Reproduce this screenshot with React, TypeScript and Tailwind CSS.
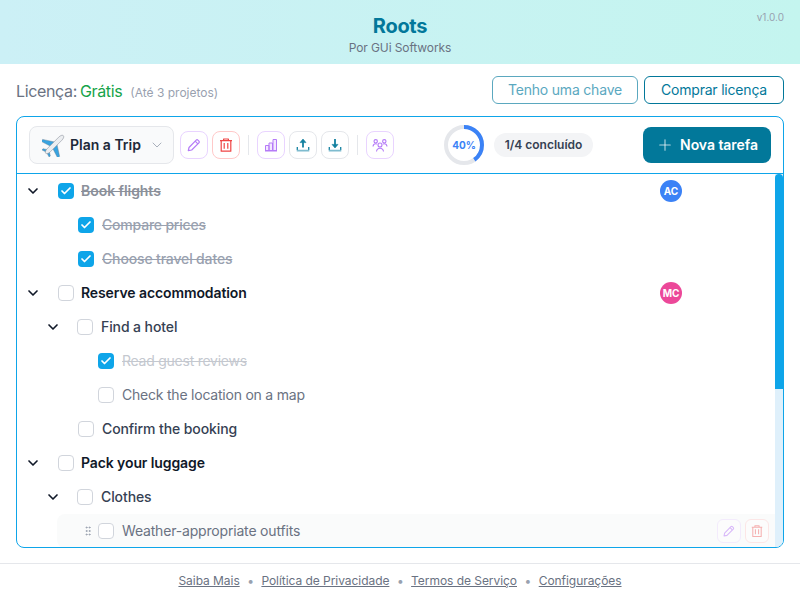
import { Check, ChevronDown, GripVertical, Plus } from "lucide-react";

type Row = {
  label: string;
  pad: string;
  parent?: boolean;
  arrowGap?: string;
  done?: boolean;
  gap: string;
  text: string;
  avatar?: { name: string; color: string };
};

const rows: Row[] = [
  { label: "Book flights", pad: "pl-[8px]", parent: true, arrowGap: "mr-[17px]", gap: "ml-[7px]", done: true, text: "font-semibold tracking-[-0.05px] text-[#8b909a] line-through", avatar: { name: "AC", color: "bg-[#3b82f6]" } },
  { label: "Compare prices", pad: "pl-[61px]", gap: "ml-[8px]", done: true, text: "font-medium tracking-[-0.2px] text-gray-400 line-through" },
  { label: "Choose travel dates", pad: "pl-[61px]", gap: "ml-[8px]", done: true, text: "font-medium tracking-[-0.15px] text-gray-400 line-through" },
  { label: "Reserve accommodation", pad: "pl-[8px]", parent: true, arrowGap: "mr-[17px]", gap: "ml-[7px]", text: "font-semibold tracking-[-0.1px] text-gray-900", avatar: { name: "MC", color: "bg-[#ec4899]" } },
  { label: "Find a hotel", pad: "pl-[28px]", parent: true, arrowGap: "mr-[16px]", gap: "ml-[8px]", text: "font-medium tracking-[-0.1px] text-gray-700" },
  { label: "Read guest reviews", pad: "pl-[81px]", gap: "ml-[8px]", done: true, text: "tracking-[-0.25px] text-[#c4c8cf] line-through" },
  { label: "Check the location on a map", pad: "pl-[81px]", gap: "ml-[8px]", text: "tracking-[-0.22px] text-gray-500" },
  { label: "Confirm the booking", pad: "pl-[61px]", gap: "ml-[8px]", text: "font-medium tracking-[-0.1px] text-gray-700" },
  { label: "Pack your luggage", pad: "pl-[8px]", parent: true, arrowGap: "mr-[17px]", gap: "ml-[7px]", text: "font-semibold tracking-[-0.1px] text-gray-900" },
  { label: "Clothes", pad: "pl-[28px]", parent: true, arrowGap: "mr-[16px]", gap: "ml-[8px]", text: "font-medium tracking-[-0.1px] text-gray-700" },
];

const PencilIcon = ({ size = 16 }: { size?: number }) => (
  <svg width={size} height={size} viewBox="0 0 16 16" fill="none" stroke="currentColor" strokeWidth="1.2" strokeLinejoin="round">
    <path d="M2.300 13.700l.7-3.200 7.200-7.400c.5-.5 1.200-.5 1.700 0l1 1c.5.5.5 1.200 0 1.700l-7.200 7.200-3.400.7z" />
    <path d="M9.200 4.200l2.600 2.600" />
  </svg>
);

const TrashIcon = ({ size = 16 }: { size?: number }) => (
  <svg width={size} height={size} viewBox="0 0 16 16" fill="none" stroke="currentColor" strokeWidth="1.2" strokeLinejoin="round">
    <path d="M2 3.600h12M5.600 3.400V2h4.800v1.400M3.200 3.600v10.600h9.600V3.600M6.200 6v5.800M9.800 6v5.800" />
  </svg>
);

const ChartIcon = () => (
  <svg width="16" height="16" viewBox="0 0 16 16" fill="none" stroke="#b57bf7" strokeWidth="1">
    <path d="M2.500 8.500h3.500v5H2.500zM6 6h3.500v7.500H6zM10 2.500h3.500v11H10z" fill="#f3e8ff" />
    <path d="M2 13.800h12" stroke="#b57bf7" strokeWidth="1.600" />
  </svg>
);

const UploadIcon = () => (
  <svg width="16" height="16" viewBox="0 0 16 16" fill="none" stroke="#1481a0" strokeWidth="1.300">
    <path d="M8 10.500V3.500" strokeWidth="1.800" />
    <path d="M5 5.600L8 2l3 3.600z" fill="#1481a0" strokeWidth=".6" strokeLinejoin="round" />
    <path d="M2.300 10v3" />
    <path d="M13.700 10v3" />
    <path d="M1.700 13.700h12.600" stroke="#7fbccf" strokeWidth="1.800" />
  </svg>
);

const DownloadIcon = () => (
  <svg width="16" height="16" viewBox="0 0 16 16" fill="none" stroke="#1481a0" strokeWidth="1.300">
    <path d="M8 2v7" strokeWidth="1.800" />
    <path d="M5 7.400L8 11l3-3.600z" fill="#1481a0" strokeWidth=".6" strokeLinejoin="round" />
    <path d="M2.300 10v3" />
    <path d="M13.700 10v3" />
    <path d="M1.700 13.700h12.600" stroke="#7fbccf" strokeWidth="1.800" />
  </svg>
);

const GroupIcon = () => (
  <svg width="16" height="16" viewBox="0 0 16 16" fill="none" stroke="#b57bf7" strokeWidth="1.100">
    <circle cx="8" cy="8" r="2" />
    <circle cx="3.700" cy="4.300" r="1.700" />
    <circle cx="12.300" cy="4.300" r="1.700" />
    <path d="M4.500 14.500c.3-2 1.600-3.200 3.500-3.200s3.200 1.200 3.500 3.200M1 9.500c.2-1.700 1-2.800 2.700-2.800.6 0 1 .1 1.400.4M15 9.500c-.2-1.700-1-2.800-2.700-2.800-.6 0-1 .1-1.400.4" />
  </svg>
);

const PlaneIcon = () => (
  <svg width="23" height="23" viewBox="0 0 24 24">
    <g transform="rotate(45 12 12)">
      <path d="M10.400 8.500L-.5 15.500v2.700l10.900-3.500z" fill="#38a3e0" stroke="#6b7a87" strokeWidth=".4" />
      <path d="M13.600 8.500l10.900 7v2.700l-10.900-3.500z" fill="#38a3e0" stroke="#6b7a87" strokeWidth=".4" />
      <path d="M10.600 19.500l-4 2.600v1.700l4.200-1.300zM13.400 19.500l4 2.600v1.700l-4.200-1.300z" fill="#38a3e0" stroke="#6b7a87" strokeWidth=".4" />
      <path d="M12 -2.500c1.500 0 2.300 2.300 2.300 4.500v17.500c0 1.800-1.200 4-2.300 4s-2.300-2.200-2.300-4V2c0-2.200.8-4.500 2.300-4.500z" fill="#eceef1" stroke="#7c8591" strokeWidth=".5" />
    </g>
  </svg>
);

const Box = ({ done }: { done?: boolean }) =>
  done ? (
    <span className="flex h-4 w-4 shrink-0 items-center justify-center rounded-[4px] bg-[#0ea5e9] text-white">
      <Check size={12} strokeWidth={3.5} />
    </span>
  ) : (
    <span className="h-4 w-4 shrink-0 rounded-[4px] border border-gray-300 bg-white" />
  );

const Tool = ({ border, children }: { border: string; children: React.ReactNode }) => (
  <button className={`flex h-7 w-7 items-center justify-center rounded-lg border bg-white ${border}`}>{children}</button>
);

const TaskRow = ({ row }: { row: Row }) => (
  <div className={`flex h-[34px] shrink-0 items-center ${row.pad}`}>
    {row.parent && (
      <ChevronDown size={16} strokeWidth={2.5} className={`shrink-0 text-gray-900 ${row.arrowGap}`} />
    )}
    <Box done={row.done} />
    <span className={`flex-1 text-sm ${row.gap} ${row.text}`}>{row.label}</span>
    {row.avatar && (
      <span className={`mr-[93px] flex h-[22px] w-[22px] items-center justify-center rounded-full text-[10px] font-bold text-white ${row.avatar.color}`}>
        {row.avatar.name}
      </span>
    )}
  </div>
);

export default function App() {
  return (
    <div className="flex h-[600px] w-[800px] flex-col overflow-hidden bg-white font-['Inter',sans-serif]">
      <header className="relative flex h-16 shrink-0 flex-col items-center justify-center bg-linear-to-r from-[#ccf0f6] to-[#c4f5ef] pt-[5px]">
        <h1 className="text-xl leading-6 font-bold tracking-[-0.3px] text-[#02789a]">Roots</h1>
        <p className="mt-[2px] text-xs leading-4 tracking-[-0.1px] text-gray-500">Por GUi Softworks</p>
        <span className="absolute top-[10px] right-[16px] text-[10px] text-gray-400">v1.0.0</span>
      </header>

      <div className="flex h-[52px] shrink-0 items-center justify-between px-4">
        <div className="mt-[2px] flex items-baseline">
          <span className="text-base tracking-[-0.35px] text-gray-500">Licença:</span>
          <span className="ml-[3px] text-base tracking-[-0.35px] text-[#16a34a]">Grátis</span>
          <span className="ml-[8px] text-xs text-gray-400">(Até 3 projetos)</span>
        </div>
        <div className="flex gap-[6px]">
          <button className="h-7 w-[146px] rounded-md border border-[#5ba8bf] text-sm tracking-[-0.2px] text-[#5ba8bf]">Tenho uma chave</button>
          <button className="h-7 w-[140px] rounded-md border border-[#02789a] text-sm tracking-[-0.2px] text-[#02789a]">Comprar licença</button>
        </div>
      </div>

      <section className="mx-4 flex h-[432px] shrink-0 flex-col overflow-hidden rounded-lg border border-[#0ea5e9]">
        <div className="flex h-[57px] shrink-0 items-center justify-between border-b border-[#0ea5e9] px-3">
          <div className="flex items-center">
            <button className="flex h-[38px] w-[145px] items-center rounded-lg border border-gray-200 bg-gray-50 pl-3">
              <PlaneIcon />
              <span className="ml-[5px] text-sm font-semibold text-gray-800">Plan a Trip</span>
              <ChevronDown size={16} strokeWidth={1.25} className="ml-2 text-gray-400" />
            </button>
            <div className="ml-[6px] flex items-center gap-1">
              <Tool border="border-purple-200"><span className="text-[#b57bf7]"><PencilIcon /></span></Tool>
              <Tool border="border-red-200"><span className="text-[#ef4444]"><TrashIcon /></span></Tool>
            </div>
            <div className="mx-2 h-5 w-px bg-gray-200" />
            <div className="flex items-center gap-1">
              <Tool border="border-purple-200"><ChartIcon /></Tool>
              <Tool border="border-gray-200"><UploadIcon /></Tool>
              <Tool border="border-gray-200"><DownloadIcon /></Tool>
            </div>
            <div className="mx-2 h-5 w-px bg-gray-200" />
            <Tool border="border-purple-200"><GroupIcon /></Tool>
          </div>

          <div className="flex items-center gap-[10px]">
            <div className="relative h-10 w-10">
              <svg width="40" height="40" viewBox="0 0 40 40" fill="none" strokeWidth="4">
                <circle cx="20" cy="20" r="18" stroke="#e5e7eb" />
                <circle cx="20" cy="20" r="18" stroke="#3b82f6" strokeDasharray="45.24 113.1" transform="rotate(-90 20 20)" />
              </svg>
              <span className="absolute inset-0 flex items-center justify-center text-[10px] font-bold text-[#3b82f6]">40%</span>
            </div>
            <span className="flex h-6 w-[99px] items-center justify-center rounded-full bg-gray-100 text-xs font-semibold text-gray-700">1/4 concluído</span>
          </div>

          <button className="flex h-9 w-[128px] items-center justify-center rounded-lg bg-[#02789a] text-sm font-semibold tracking-[-0.05px] text-white">
            <Plus size={18} strokeWidth={1.5} className="mr-[6px] text-white/70" />
            Nova tarefa
          </button>
        </div>

        <div className="flex min-h-0 flex-1">
          <div className="flex min-w-0 flex-1 flex-col overflow-hidden">
            {rows.map((row) => (
              <TaskRow key={row.label} row={row} />
            ))}
            <div className="ml-[40px] flex h-[34px] shrink-0 items-center rounded-l-lg bg-[#fafbfb] pl-[25px]">
              <GripVertical size={12} strokeWidth={2} className="mr-1 text-gray-400" />
              <Box />
              <span className="ml-[8px] flex-1 text-sm tracking-[-0.18px] text-gray-500">Weather-appropriate outfits</span>
              <div className="mr-[6px] flex gap-1 opacity-40">
                <span className="flex h-6 w-6 items-center justify-center rounded-md border border-purple-200 bg-white text-[#a855f7]"><PencilIcon size={14} /></span>
                <span className="flex h-6 w-6 items-center justify-center rounded-md border border-red-200 bg-white text-[#ef4444]"><TrashIcon size={14} /></span>
              </div>
            </div>
          </div>
          <div className="w-2 shrink-0 bg-[#dff0fb]">
            <div className="h-[215px] rounded-t-[4px] bg-[#0ea5e9]" />
          </div>
        </div>
      </section>

      <footer className="mt-[15px] flex flex-1 items-center justify-center gap-[7.5px] border-t border-gray-200 pb-[2px] text-xs tracking-[-0.05px] text-gray-500">
        <a className="underline">Saiba Mais</a>
        <span className="text-gray-400">•</span>
        <a className="underline">Política de Privacidade</a>
        <span className="text-gray-400">•</span>
        <a className="underline">Termos de Serviço</a>
        <span className="text-gray-400">•</span>
        <a className="underline">Configurações</a>
      </footer>
    </div>
  );
}
